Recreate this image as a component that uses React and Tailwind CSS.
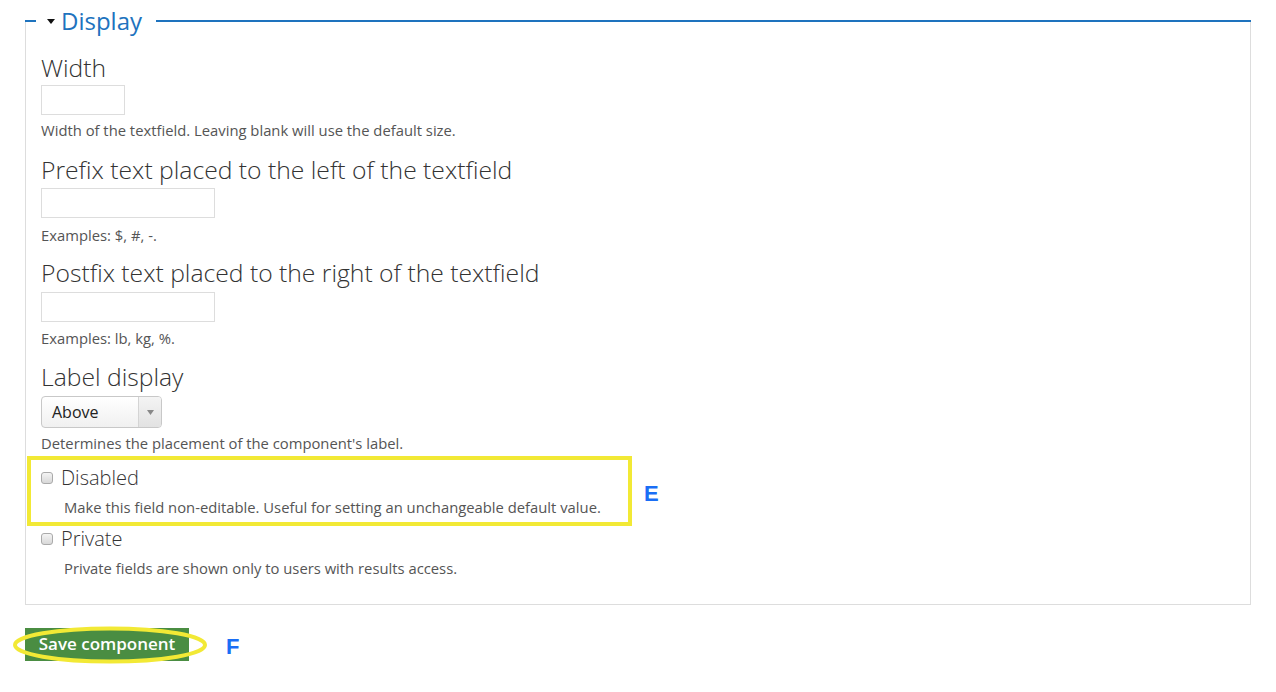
const Help = ({ children, className = '' }) => (
  <div className={`text-[14.8px] leading-[18px] text-[#555] ${className}`}>{children}</div>
)

const Label = ({ children }) => (
  <div className="text-[24.7px] leading-[29px] text-[#333] font-light">{children}</div>
)

const TextBox = ({ width }) => (
  <div className={`h-[30px] border border-[#ddd] bg-white ${width}`} />
)

const Checkbox = () => (
  <span className="inline-block w-[12px] h-[12px] rounded-[3px] border border-[#aaa] bg-gradient-to-b from-[#f4f4f4] to-[#d8d8d8]" />
)

export default function App() {
  return (
    <div className="relative w-[1276px] h-[692px] bg-white font-['Open_Sans','Liberation_Sans',sans-serif] overflow-hidden">
      <div className="pt-[6px] pl-[25px] pr-[25px]">
        {/* legend row */}
        <div className="flex items-center h-[29px]">
          <div className="w-[11px] h-[2px] bg-[#1e73be]" />
          <div className="flex items-center pl-[11px] pr-[14px]">
            <svg width="8" height="5" viewBox="0 0 8 5" className="mr-[6px] mt-[2px]">
              <path d="M0 0 L8 0 L4 5 Z" fill="#111" />
            </svg>
            <span className="text-[24px] leading-[29px] text-[#1e73be]">Display</span>
          </div>
          <div className="flex-1 h-[2px] bg-[#1e73be]" />
        </div>

        <div className="-mt-[14px] border-l border-r border-b border-[#ddd] pl-[15px] pr-[15px] pt-[32px] pb-[27px]">
          <Label>Width</Label>
          <div className="mt-[3px]"><TextBox width="w-[84px]" /></div>
          <Help className="mt-[6px]">Width of the textfield. Leaving blank will use the default size.</Help>

          <div className="mt-[16px]"><Label>Prefix text placed to the left of the textfield</Label></div>
          <div className="mt-[4px]"><TextBox width="w-[174px]" /></div>
          <Help className="mt-[8px]">Examples: $, #, -.</Help>

          <div className="mt-[14px]"><Label>Postfix text placed to the right of the textfield</Label></div>
          <div className="mt-[5px]"><TextBox width="w-[174px]" /></div>
          <Help className="mt-[7px]">Examples: lb, kg, %.</Help>

          <div className="mt-[15px]"><Label>Label display</Label></div>
          <div className="mt-[5px] flex w-[121px] h-[32px] rounded-[4px] border border-[#c8c8c8] bg-gradient-to-b from-white to-[#f0f0f0] overflow-hidden">
            <div className="flex-1 pl-[10px] text-[16px] leading-[30px] text-[#222]">Above</div>
            <div className="w-[23px] border-l border-[#d4d4d4] bg-gradient-to-b from-[#f4f4f4] to-[#e2e2e2] flex items-center justify-center">
              <svg width="7" height="5" viewBox="0 0 7 5">
                <path d="M0 0 L7 0 L3.5 5 Z" fill="#888" />
              </svg>
            </div>
          </div>
          <Help className="mt-[6px]">Determines the placement of the component's label.</Help>

          <div className="mt-[4px] -ml-[14px] w-[605px] border-[4px] border-[#f2e935] pl-[10px] pt-[6px] pb-[6px]">
            <div className="flex items-center h-[24px]">
              <Checkbox />
              <span className="ml-[8px] text-[20px] leading-[24px] text-[#333] font-light">Disabled</span>
            </div>
            <Help className="mt-[8px] ml-[23px]">Make this field non-editable. Useful for setting an unchangeable default value.</Help>
          </div>

          <div className="mt-[1px] flex items-center h-[24px]">
            <Checkbox />
            <span className="ml-[8px] text-[20px] leading-[24px] text-[#333] font-light">Private</span>
          </div>
          <Help className="mt-[8px] ml-[23px]">Private fields are shown only to users with results access.</Help>
        </div>

        <div className="mt-[20px] flex items-center">
          <div className="relative">
            <div className="w-[164px] h-[33px] bg-[#4a8d42] flex items-center justify-center text-white text-[17px] font-semibold">
              Save component
            </div>
            <svg className="absolute left-[-12px] top-[-2px]" width="194" height="38" viewBox="0 0 194 38">
              <ellipse cx="97" cy="19" rx="95" ry="16.5" fill="none" stroke="#f2e935" strokeWidth="4" />
            </svg>
          </div>
          <span className="ml-[37px] mt-[5px] text-[22px] font-bold text-[#1a6ef5] font-['Liberation_Sans',sans-serif]">F</span>
        </div>
      </div>

      <span className="absolute left-[644px] top-[477px] text-[22px] font-bold text-[#1a6ef5] font-['Liberation_Sans',sans-serif]">E</span>
    </div>
  )
}
